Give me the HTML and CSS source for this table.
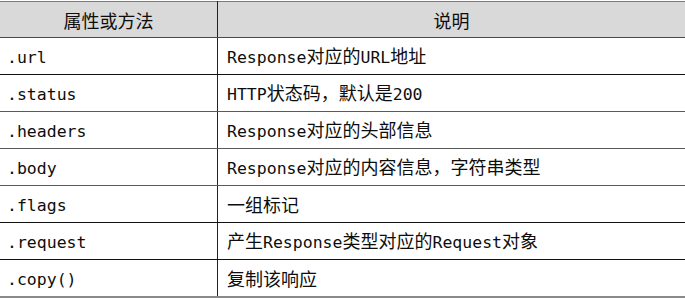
FILE: index.html
```html
<!DOCTYPE html>
<html lang="zh">
<head>
<meta charset="utf-8">
<link rel="stylesheet" href="styles.css">
</head>
<body>
<table class="tbl">
  <thead>
    <tr><th class="c1">属性或方法</th><th class="c2">说明</th></tr>
  </thead>
  <tbody>
    <tr class="dk"><td class="code">.url</td><td class="desc"><span class="m">Response</span>对应的<span class="m">URL</span>地址</td></tr>
    <tr class="gy"><td class="code">.status</td><td class="desc"><span class="m">HTTP</span>状态码，默认是<span class="m">200</span></td></tr>
    <tr class="gy"><td class="code">.headers</td><td class="desc"><span class="m">Response</span>对应的头部信息</td></tr>
    <tr class="gy"><td class="code">.body</td><td class="desc"><span class="m">Response</span>对应的内容信息，字符串类型</td></tr>
    <tr class="dk"><td class="code">.flags</td><td class="desc">一组标记</td></tr>
    <tr class="dk"><td class="code">.request</td><td class="desc">产生<span class="m">Response</span>类型对应的<span class="m">Request</span>对象</td></tr>
    <tr class="last"><td class="code">.copy()</td><td class="desc">复制该响应</td></tr>
  </tbody>
</table>
</body>
</html>
```

FILE: styles.css
```css
html, body {
  margin: 0;
  padding: 0;
  background: #ffffff;
}
body {
  padding-top: 1px;
}
.tbl {
  width: 685px;
  border-collapse: collapse;
  table-layout: fixed;
  color: #0d0d0d;
  font-family: "Noto Sans CJK SC", "Noto Sans", sans-serif;
  font-size: 18px;
}
.tbl th {
  background: #d9d9d9;
  font-weight: normal;
  height: 35px;
  padding: 0;
  text-align: center;
  line-height: 20px;
  border-top: 1px solid #7a7a7a;
  border-bottom: 1px solid #4a4a4a;
}
.tbl th.c1 {
  width: 217px;
  border-right: 1px solid #222222;
}
.tbl td {
  height: 36px;
  padding: 0 0 0 9px;
  line-height: 20px;
  white-space: nowrap;
  vertical-align: middle;
}
.tbl td.code {
  border-right: 1px solid #222222;
  font-family: "DejaVu Sans Mono", "Liberation Mono", monospace;
  font-size: 16.5px;
  padding: 3px 0 0 7px;
  height: 33px;
}
.tbl td.desc {
  padding-left: 9px;
}
.m {
  font-family: "DejaVu Sans Mono", "Liberation Mono", monospace;
  font-size: 16.5px;
  line-height: 1;
}
.tbl tr.dk td {
  border-bottom: 1px solid #111111;
}
.tbl tr.gy td {
  border-bottom: 1px solid #5a5a5a;
}
.tbl tr.last td {
  border-bottom: 2px solid #8a8a8a;
}
```
